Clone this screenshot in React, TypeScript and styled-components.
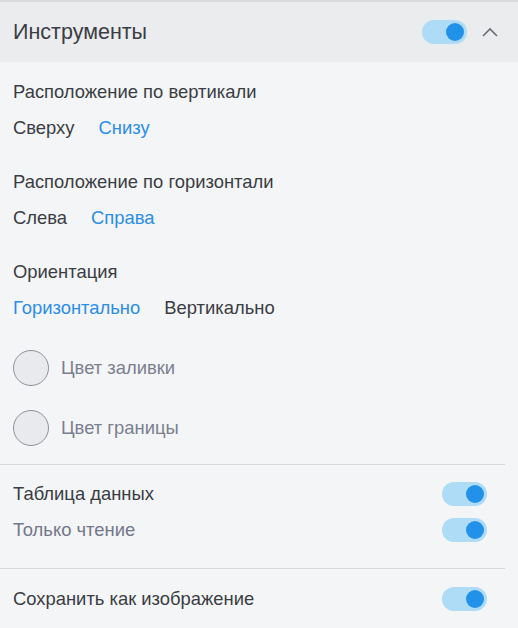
import React, { useState } from "react";
import styled, { createGlobalStyle } from "styled-components";

const GlobalStyle = createGlobalStyle`
	html, body {
		margin: 0;
		padding: 0;
		background: #f4f5f7;
	}
	body {
		font-family: "Liberation Sans", Arial, sans-serif;
		color: #3a3d43;
	}
`;

const Panel = styled.div`
	width: 518px;
	min-height: 628px;
	background: #f4f5f7;
	border-top: 2px solid #d9dadd;
	box-sizing: border-box;
`;

const Header = styled.div`
	height: 60px;
	background: #ebecee;
	display: flex;
	align-items: center;
	padding: 0 20px 0 13px;
`;

const Title = styled.h2`
	flex: 1;
	margin: 0;
	font-size: 21.5px;
	font-weight: 400;
	color: #3a3d43;
`;

const HeaderControls = styled.div`
	display: flex;
	align-items: center;
	gap: 15px;
`;

const Body = styled.div`
	padding: 12px 0 0 13px;
	display: flex;
	flex-direction: column;
`;

const Section = styled.div`
	display: flex;
	flex-direction: column;
	margin-bottom: 18px;
`;

const Label = styled.div<{ $muted?: boolean }>`
	height: 36px;
	display: flex;
	align-items: center;
	font-size: 18.4px;
	color: ${(p) => (p.$muted ? "#72778a" : "#3a3d43")};
`;

const Options = styled.div`
	height: 36px;
	display: flex;
	align-items: center;
	gap: 24px;
`;

const Option = styled.button<{ $active?: boolean }>`
	border: none;
	background: none;
	padding: 0;
	font: inherit;
	font-size: 18.4px;
	cursor: pointer;
	color: ${(p) => (p.$active ? "#2a8de6" : "#3a3d43")};
`;

const ColorRow = styled.div`
	height: 48px;
	display: flex;
	align-items: center;
	gap: 12px;
	margin-bottom: 12px;
	font-size: 18.4px;
	color: #7b7f8e;
`;

const Swatch = styled.span`
	width: 34px;
	height: 34px;
	border-radius: 50%;
	border: 1px solid #8e919b;
	background: #e9eaed;
`;

const Divider = styled.hr`
	border: none;
	border-top: 1px solid #d6d8dc;
	margin: 0 13px 0 -13px;
`;

const ToggleGroup = styled.div<{ $pad: string }>`
	padding: ${(p) => p.$pad};
	display: flex;
	flex-direction: column;
`;

const ToggleRow = styled.div`
	height: 36px;
	display: flex;
	align-items: center;
	justify-content: space-between;
	padding-right: 31px;
`;

const Track = styled.button<{ $on: boolean }>`
	width: 45px;
	height: 24px;
	border: none;
	border-radius: 12px;
	padding: 0 3px;
	display: flex;
	align-items: center;
	justify-content: ${(p) => (p.$on ? "flex-end" : "flex-start")};
	background: ${(p) => (p.$on ? "#aedcf6" : "#d3d5da")};
	cursor: pointer;
`;

const Knob = styled.span<{ $on: boolean }>`
	width: 18px;
	height: 18px;
	border-radius: 50%;
	background: ${(p) => (p.$on ? "#2191ea" : "#ffffff")};
`;

function Toggle({ on, onChange }: { on: boolean; onChange: () => void }) {
	return (
		<Track $on={on} onClick={onChange}>
			<Knob $on={on} />
		</Track>
	);
}

function Chevron() {
	return (
		<svg width="16" height="10" viewBox="0 0 16 10">
			<polyline points="1,9 8,2 15,9" fill="none" stroke="#6b6e76" strokeWidth="1.6" />
		</svg>
	);
}

export default function App() {
	const [enabled, setEnabled] = useState(true);
	const [vertical, setVertical] = useState("bottom");
	const [horizontal, setHorizontal] = useState("right");
	const [orientation, setOrientation] = useState("horizontal");
	const [table, setTable] = useState(true);
	const [readOnly, setReadOnly] = useState(true);
	const [saveImage, setSaveImage] = useState(true);

	return (
		<Panel>
			<GlobalStyle />
			<Header>
				<Title>Инструменты</Title>
				<HeaderControls>
					<Toggle on={enabled} onChange={() => setEnabled(!enabled)} />
					<Chevron />
				</HeaderControls>
			</Header>
			<Body>
				<Section>
					<Label>Расположение по вертикали</Label>
					<Options>
						<Option $active={vertical === "top"} onClick={() => setVertical("top")}>
							Сверху
						</Option>
						<Option $active={vertical === "bottom"} onClick={() => setVertical("bottom")}>
							Снизу
						</Option>
					</Options>
				</Section>
				<Section>
					<Label>Расположение по горизонтали</Label>
					<Options>
						<Option $active={horizontal === "left"} onClick={() => setHorizontal("left")}>
							Слева
						</Option>
						<Option $active={horizontal === "right"} onClick={() => setHorizontal("right")}>
							Справа
						</Option>
					</Options>
				</Section>
				<Section>
					<Label>Ориентация</Label>
					<Options>
						<Option
							$active={orientation === "horizontal"}
							onClick={() => setOrientation("horizontal")}
						>
							Горизонтально
						</Option>
						<Option
							$active={orientation === "vertical"}
							onClick={() => setOrientation("vertical")}
						>
							Вертикально
						</Option>
					</Options>
				</Section>
				<ColorRow>
					<Swatch />
					Цвет заливки
				</ColorRow>
				<ColorRow>
					<Swatch />
					Цвет границы
				</ColorRow>
				<Divider />
				<ToggleGroup $pad="11px 0 20px">
					<ToggleRow>
						<Label>Таблица данных</Label>
						<Toggle on={table} onChange={() => setTable(!table)} />
					</ToggleRow>
					<ToggleRow>
						<Label $muted>Только чтение</Label>
						<Toggle on={readOnly} onChange={() => setReadOnly(!readOnly)} />
					</ToggleRow>
				</ToggleGroup>
				<Divider />
				<ToggleGroup $pad="12px 0 0">
					<ToggleRow>
						<Label>Сохранить как изображение</Label>
						<Toggle on={saveImage} onChange={() => setSaveImage(!saveImage)} />
					</ToggleRow>
				</ToggleGroup>
			</Body>
		</Panel>
	);
}
